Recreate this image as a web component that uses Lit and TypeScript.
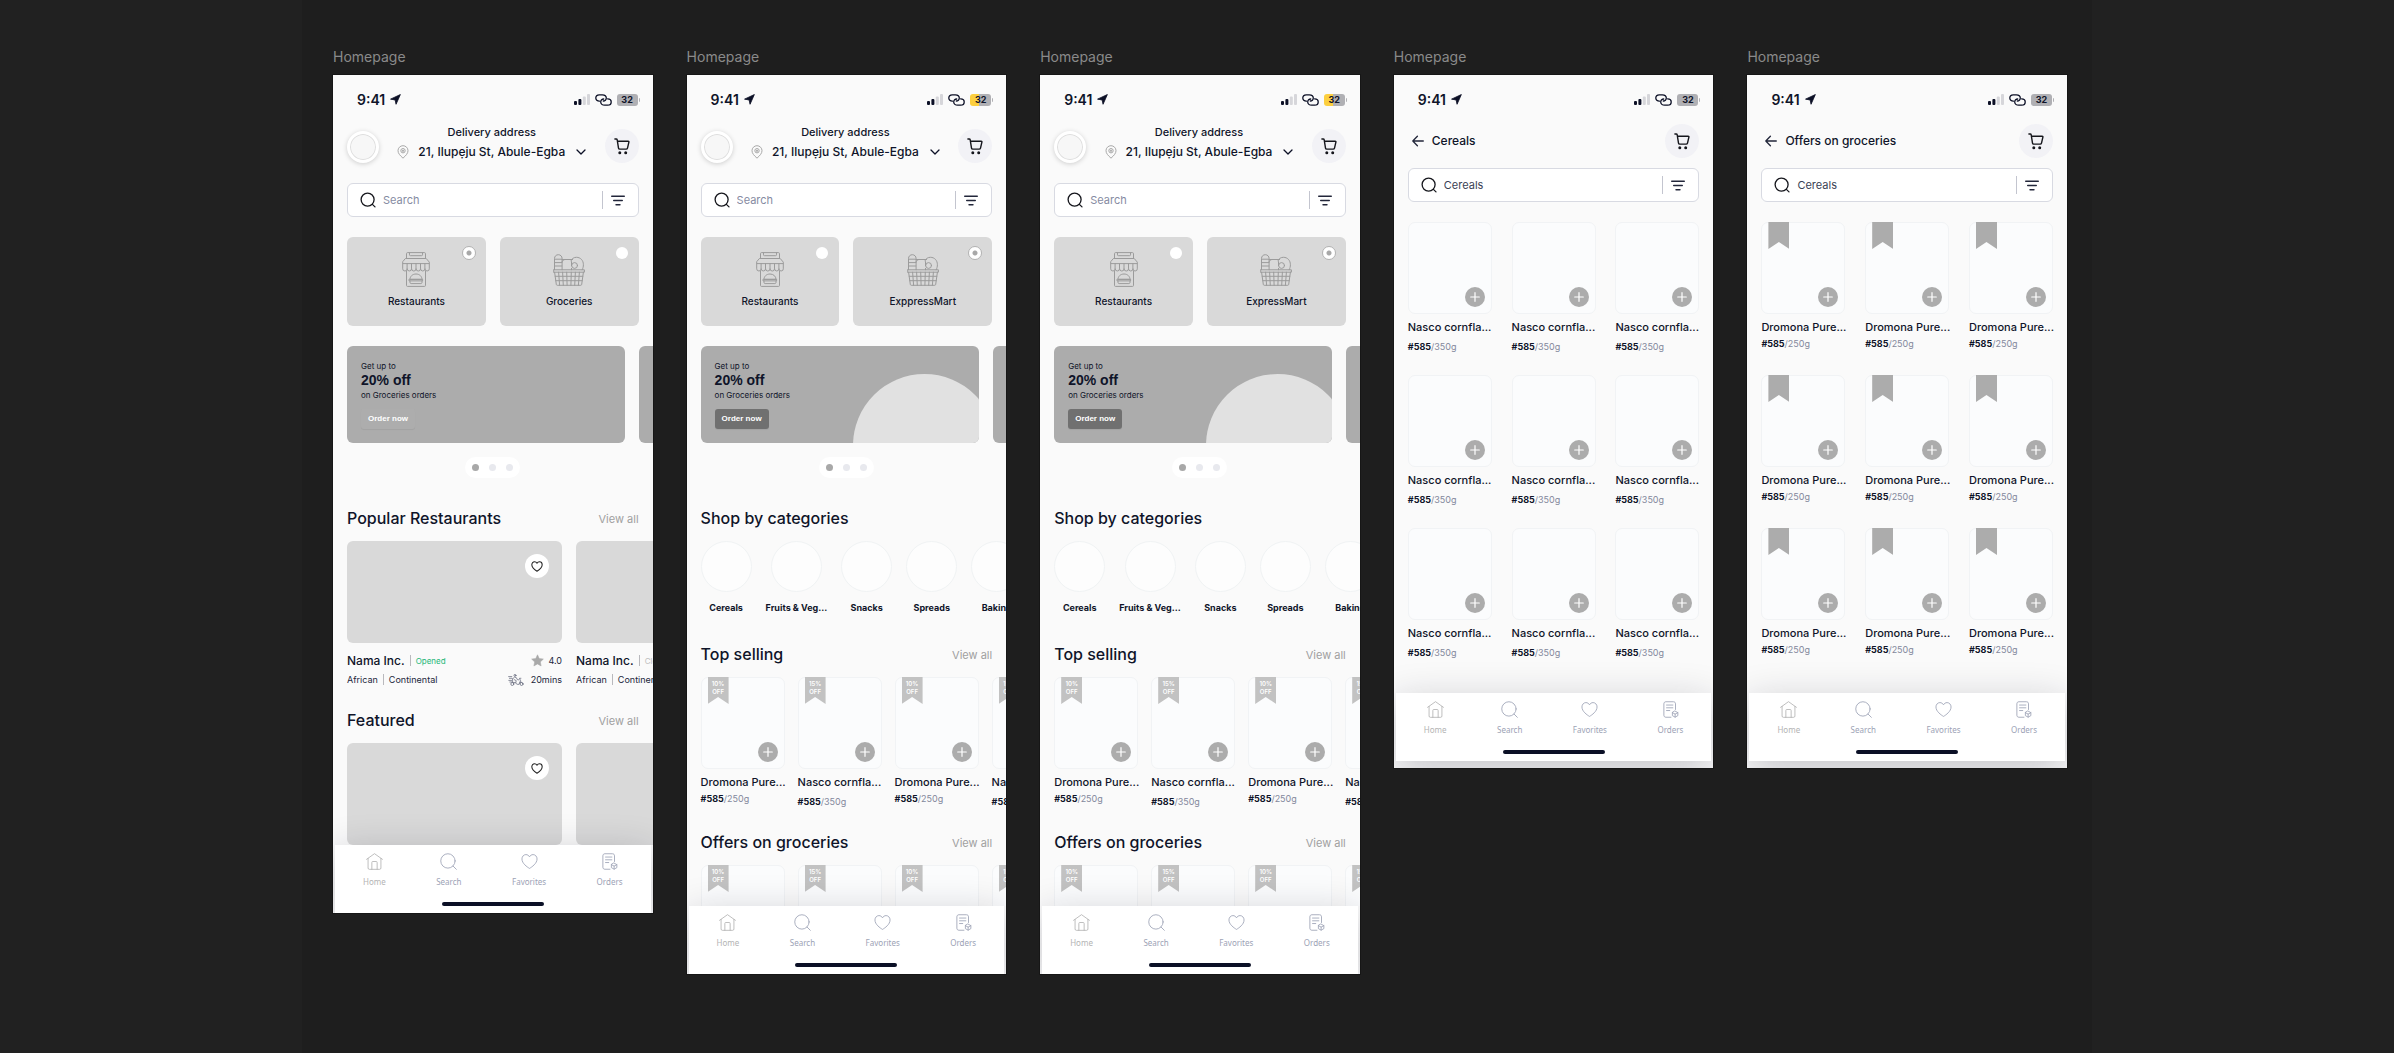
import { LitElement, html, css, svg, nothing } from "lit";
import { customElement, property } from "lit/decorators.js";
import { classMap } from "lit/directives/class-map.js";

type Screen = {
  kind: "restaurants" | "mart" | "list";
  title?: string;
  mart?: string;
  charging?: boolean;
  item?: Product;
};

type Product = { name: string; price: string; unit: string; tag?: string; ribbon?: boolean; roomy?: boolean };

const DROMONA: Product = { name: "Dromona Pure...", price: "#585", unit: "/250g", ribbon: true, tag: "10%" };
const NASCO: Product = { name: "Nasco cornfla...", price: "#585", unit: "/350g", ribbon: true, tag: "15%", roomy: true };

const SCREENS: Screen[] = [
  { kind: "restaurants", mart: "Groceries" },
  { kind: "mart", mart: "ExppressMart", charging: true },
  { kind: "mart", mart: "ExpressMart", charging: true },
  { kind: "list", title: "Cereals", item: { ...NASCO, ribbon: false, tag: undefined } },
  { kind: "list", title: "Offers on groceries", item: { ...DROMONA, tag: undefined } },
];

const icons = {
  arrow: svg`<svg class="loc" viewBox="0 0 12 12"><path d="M11.3.6 6.6 11.2 5.6 6.5.6 5.6z" fill="#0c1026" stroke="#0c1026" stroke-width=".9" stroke-linejoin="round"/></svg>`,
  signal: svg`<svg class="signal" viewBox="0 0 16 11"><rect x="0" y="7" width="3" height="4" rx="1" fill="#0c1026"/><rect x="4.4" y="5" width="3" height="6" rx="1" fill="#0c1026"/><rect x="8.8" y="2.4" width="3" height="8.6" rx="1" fill="#d6d6da"/><rect x="13" y="0" width="3" height="11" rx="1" fill="#d6d6da"/></svg>`,
  chain: svg`<svg class="chain" viewBox="0 0 17 12" fill="none" stroke="#0c1026" stroke-width="1.3" stroke-linecap="round"><path d="M4.4 7.2C2.200 7.200.8 5.900.8 4.100.8 2.200 2.200.9 4.300.9h3c2.300 0 4 1.400 4 3.200 0 1.700-1.400 2.900-3 2.900"/><path d="M12.600 4.800c2.200 0 3.600 1.300 3.600 3.100 0 1.900-1.400 3.200-3.500 3.200h-3c-2.300 0-4-1.400-4-3.200C5.700 6.200 7.100 5 8.700 5"/></svg>`,
  pin: svg`<svg class="pin" viewBox="0 0 12 14" fill="none" stroke="#a9a9a9" stroke-width="1"><path d="M6 13.200C3.200 10.600 1 8.400 1 5.700a5 5 0 0 1 10 0c0 2.700-2.200 4.900-5 7.500z"/><circle cx="6" cy="5.700" r="2.200"/><circle cx="6" cy="5.700" r=".7" fill="#a9a9a9"/></svg>`,
  chevron: svg`<svg class="chev" viewBox="0 0 10 6" fill="none" stroke="#0c1026" stroke-width="1.300" stroke-linecap="round" stroke-linejoin="round"><path d="m1 1 4 4 4-4"/></svg>`,
  cart: svg`<svg class="cart-icon" viewBox="0 0 16 17" fill="none" stroke="#15161c" stroke-width="1.400" stroke-linecap="round" stroke-linejoin="round"><path d="M.9 1h1.300c.6 0 .9.300 1 .9l1.300 8.200c.1.700.5 1 1.200 1h6.500c.7 0 1.100-.3 1.300-1l1.400-6c.1-.6-.1-.9-.7-.9H3.500"/><circle cx="5.800" cy="14.800" r=".8" fill="#15161c"/><circle cx="11.700" cy="14.800" r=".8" fill="#15161c"/></svg>`,
  search: svg`<svg class="search-icon" viewBox="0 0 16 16" fill="none" stroke="#15161c" stroke-width="1.300" stroke-linecap="round"><circle cx="7.600" cy="7.600" r="6.500"/><path d="m12.400 12.400 2.600 2.500"/></svg>`,
  filter: svg`<svg class="filter-icon" viewBox="0 0 14 11" fill="none" stroke="#22263a" stroke-width="1.400" stroke-linecap="round"><path d="M.7 1.200h12.600M2.700 5.500h8.600M5 9.800h4"/></svg>`,
  back: svg`<svg class="back-icon" viewBox="0 0 12 12" fill="none" stroke="#22263a" stroke-width="1.300" stroke-linecap="round" stroke-linejoin="round"><path d="M11.300 6H.8M5.400 1.200.8 6l4.600 4.800"/></svg>`,
  heart: svg`<svg class="heart" viewBox="0 0 18 17" fill="none" stroke="currentColor" stroke-linejoin="round"><path d="M9 15.800C6.500 14.300 1 10.600 1 5.800 1 3.200 2.900 1.200 5.200 1.200c1.600 0 3 .9 3.800 2.300.8-1.400 2.200-2.300 3.800-2.300C15.100 1.200 17 3.200 17 5.800c0 4.800-5.500 8.500-8 10z"/></svg>`,
  star: svg`<svg class="star" viewBox="0 0 24 24"><path fill="#a9a9a9" stroke="#a9a9a9" stroke-linejoin="round" d="m12 1.500 3.200 7 7.600.9-5.600 5.200 1.500 7.500L12 18.300l-6.700 3.800 1.500-7.500L1.200 9.400l7.600-.9z"/></svg>`,
  rider: svg`<svg class="rider" viewBox="0 0 16 12" fill="none" stroke="#5a5f73" stroke-width=".7" stroke-linecap="round" stroke-linejoin="round"><circle cx="7" cy="1.400" r="1"/><path d="M.6 2.600h3.200M1.400 4.300h2.300M.8 6.400h2.800M1.800 8h2M5 4.500l1.600-1.400 1.800.6.900 1.900 1.600.300M6.300 5.700l1.900.9-.4 2.200M4.600 4.600v4h2.600l1.900 1.700h2l1.500-3.600-1.200-2.400h1.500M11.800 8.300h1.700l1.100 1"/><circle cx="4.300" cy="10" r="1.500"/><circle cx="13.600" cy="10" r="1.500"/></svg>`,
  plus: svg`<svg class="plus" viewBox="0 0 10 10" stroke="#fff" stroke-width="1.200" stroke-linecap="round"><path d="M5 .7v8.600M.7 5h8.600"/></svg>`,
  store: svg`<svg class="store" viewBox="0 0 28 35" fill="none" stroke="#9b9b9b" stroke-width="1" stroke-linejoin="round" stroke-linecap="round"><path d="M4.500 6.500V1.600c0-.6.400-1 1-1h17c.6 0 1 .4 1 1v4.900M7.500.8v2c0 .6.300.9.900.9h11.200c.6 0 .9-.3.900-.9v-2"/><path d="M3.800 6.500h20.400l3.100 3.600v1.500H.7v-1.500zM.7 11.600v5.200a2.200 2.200 0 0 0 4.400 0v-5.200M5.100 16.800a2.200 2.200 0 0 0 4.400 0v-5.200M9.500 16.800a2.200 2.200 0 0 0 4.500 0v-5.200M14 16.800a2.200 2.200 0 0 0 4.500 0v-5.200M18.500 16.800a2.200 2.200 0 0 0 4.400 0v-5.200M22.900 16.800a2.200 2.200 0 0 0 4.400 0v-5.200"/><path d="M4.500 19v14.400c0 .6.300 1 .9 1h17.200c.6 0 .9-.4.900-1V19"/><path d="M8 27.200c0-3 2.600-5.200 6-5.200s6 2.200 6 5.200zM7.400 27.200h13.200v1.700H7.400zM8 28.900v1.600c0 .6.500 1.100 1.100 1.100h9.800c.6 0 1.100-.5 1.100-1.100v-1.600"/></svg>`,
  basket: svg`<svg class="basket" viewBox="0 0 32 32" fill="none" stroke="#9b9b9b" stroke-width="1" stroke-linejoin="round" stroke-linecap="round"><path d="M1.500 15.800V4.500C1.500 2.300 3.200.7 5.300.7s3.800 1.600 3.800 3.800v11.300M1.800 5.200h7M1.800 8.600h7M1.800 12h7"/><path d="M9.100 5.500h10.500M12 5.500c-1.500 0-2.900 1-2.900 2.500M18 6.800c1-2.300 3-3.500 5.400-3.500 4.200 0 7 3.200 7 7.400 0 1.800-.4 3.400-1.200 5.100M18.500 7.600v4.200M18.500 14.400v1.400"/><circle cx="21.600" cy="11.500" r="2.900"/><path d="M.6 15.800h30.800v2.400H.6zM1.600 18.200l1.700 12.200c.1.600.4.900 1 .9h23.400c.6 0 .9-.3 1-.9l1.700-12.200M2.200 22.300h27.600M2.800 26.700h26.400M5.600 18.200l1 13.100M9.600 18.200l.7 13.100M13.700 18.200l.4 13.100M18.300 18.200l-.4 13.100M22.400 18.200l-.7 13.100M26.400 18.200l-1 13.100"/></svg>`,
  navHome: svg`<svg class="nav-icon" viewBox="0 0 18 18" fill="none" stroke="currentColor" stroke-width=".9" stroke-linejoin="round" stroke-linecap="round"><path d="M.6 6.700 9 .7l8.400 6M2.200 5.700v10.200c0 .9.500 1.400 1.400 1.400h10.800c.9 0 1.400-.5 1.400-1.400V5.700M6.200 17.300V10c0-.7.300-1 1-1h3.600c.7 0 1 .3 1 1v7.300"/></svg>`,
  navSearch: svg`<svg class="nav-icon" viewBox="0 0 18 18" fill="none" stroke="currentColor" stroke-width=".9" stroke-linecap="round"><circle cx="8.400" cy="8.400" r="7.600"/><path d="m13.900 13.900 3.400 3.400"/></svg>`,
  navOrders: svg`<svg class="nav-icon" viewBox="0 0 18 18" fill="none" stroke="currentColor" stroke-width=".9" stroke-linejoin="round" stroke-linecap="round"><path d="M14.300 9V3c0-1.400-.8-2.200-2.200-2.200H4.200C2.800.8 2 1.600 2 3v12c0 1.400.8 2.200 2.200 2.200h5.300M4.800 4.300h6.700M4.800 7.200h6.700M4.800 10.100h3.400"/><path d="m13.900 10.700 2.900 1.600v3.200l-2.900 1.600-2.900-1.600v-3.200zM11 12.300l2.900 1.600 2.900-1.600M13.900 13.900v3.200"/></svg>`,
};

@customElement("product-tile")
class ProductTile extends LitElement {
  @property({ attribute: false }) product!: Product;

  static styles = css`
    :host { display: block; width: 84px; min-height: 132px; }
    .photo {
      position: relative; box-sizing: border-box; height: 92px; border-radius: 7px;
      border: 1px solid #f1f3f5; background: rgba(251, 253, 254, 0.8);
    }
    .ribbon {
      position: absolute; left: 6px; top: -1px; width: 21px; height: 27px; box-sizing: border-box;
      padding-top: 3px; background: #acacac; color: #fff; text-align: center;
      clip-path: polygon(0 0, 100% 0, 100% 100%, 50% 74%, 0 100%);
      font-size: 6px; line-height: 8px; font-weight: 600;
    }
    .tagged { background: #c2c2c2; }
    .ribbon span { display: block; }
    .add {
      position: absolute; right: 6px; bottom: 6px; width: 20px; height: 20px; padding: 0;
      display: grid; place-items: center; border: 0; border-radius: 50%; background: #acacac;
    }
    .plus { width: 10px; height: 10px; }
    .name { margin: 5px 0 0; font-size: 11px; line-height: 16px; font-weight: 500; white-space: nowrap; color: #0f1429; }
    .price { margin: 2px 0 0; font-size: 9px; line-height: 14px; color: #83889c; white-space: nowrap; }
    .price b { font-weight: 700; color: #0f1429; }
    .roomy { margin-top: 5px; }
  `;

  render() {
    const p = this.product;
    return html`
      <div class="photo">
        ${p.ribbon
          ? html`<div class=${classMap({ ribbon: true, tagged: !!p.tag })}>
              ${p.tag ? html`<span>${p.tag}</span><span>OFF</span>` : nothing}
            </div>`
          : nothing}
        <button class="add" aria-label="Add to cart">${icons.plus}</button>
      </div>
      <p class="name">${p.name}</p>
      <p class=${classMap({ price: true, roomy: !!p.roomy })}><b>${p.price}</b>${p.unit}</p>
    `;
  }
}

@customElement("phone-screen")
class PhoneScreen extends LitElement {
  @property({ attribute: false }) screen!: Screen;

  static styles = css`
    :host { display: block; min-width: 0; font-family: Inter, "Liberation Sans", sans-serif; color: #0f1429; }
    h2, p, ul { margin: 0; padding: 0; }
    button { font: inherit; color: inherit; border: 0; padding: 0; background: none; }
    svg { display: block; flex: none; }
    .phone { background: #fafafa; overflow: hidden; box-shadow: 0 0 0 1px #161616; }
    .body { padding: 16px 14px 0; overflow: hidden; }

    .status { display: flex; align-items: center; height: 17px; padding: 0 0 0 10px; gap: 5px; }
    .time { font-size: 14px; font-weight: 600; line-height: 17px; }
    .loc { width: 11px; height: 11px; margin-right: auto; }
    .signal { width: 16px; height: 11px; }
    .chain { width: 17px; height: 12px; }
    .battery {
      position: relative; width: 21px; height: 12px; margin-right: 1px; border-radius: 3px;
      background: #b0b0b4; font-size: 9px; font-weight: 700; line-height: 12px; text-align: center;
    }
    .battery::after {
      content: ""; position: absolute; left: 22px; top: 4px; width: 1px; height: 4px;
      border-radius: 0 2px 2px 0; background: #b0b0b4;
    }
    .charging { background: linear-gradient(90deg, #fccf3f 42%, #b0b0b4 42%); }

    .home-head { display: flex; align-items: flex-end; justify-content: space-between; height: 40px; margin-top: 15px; }
    .avatar {
      box-sizing: border-box; width: 32px; height: 32px; border-radius: 50%; border: 3px solid #fff;
      background: #f7f7f7; box-shadow: 0 1px 5px rgba(0, 0, 0, 0.18), inset 0 0 0 1px #dedede;
    }
    .where { align-self: flex-start; display: flex; flex-direction: column; align-items: center; font-weight: 500; }
    .where-label { font-size: 11px; line-height: 19px; }
    .where-pick { display: flex; align-items: center; font-size: 12px; line-height: 19px; white-space: nowrap; }
    .pin { width: 12px; height: 14px; margin-right: 9px; }
    .chev { width: 10px; height: 6px; margin-left: 11px; }
    .cart { display: grid; place-items: center; width: 34px; height: 34px; border-radius: 50%; background: #f2f2f6; }
    .cart-icon { width: 16px; height: 17px; }

    .list-head { display: flex; align-items: center; height: 34px; margin-top: 16px; }
    .list-head .cart { margin-left: auto; }
    .back { padding: 4px; }
    .back-icon { width: 12px; height: 12px; }
    .list-title { margin-left: 4px; font-size: 12px; line-height: 18px; font-weight: 500; }

    .search {
      display: flex; align-items: center; box-sizing: border-box; height: 34px; margin-top: 20px;
      padding: 0 13px 0 12px; border: 1px solid #d8dae2; border-radius: 6px; background: #fff;
    }
    .list-search { margin-top: 10px; }
    .search-icon { width: 16px; height: 16px; }
    .query {
      flex: 1; min-width: 0; border: 0; outline: 0; padding: 0 0 0 7px; background: none;
      font: inherit; font-size: 11px; line-height: 16px; color: #3a3f55;
    }
    .query::placeholder { color: #868ba2; opacity: 1; }
    .filter { display: flex; align-items: center; height: 18px; padding-left: 8px; border-left: 1px solid #c3c5cf; }
    .filter-icon { width: 14px; height: 11px; }

    .kinds { display: grid; grid-template-columns: 1fr 1fr; gap: 14px; margin-top: 20px; }
    .kind {
      position: relative; display: flex; flex-direction: column; align-items: center; justify-content: flex-end;
      box-sizing: border-box; height: 89px; padding-bottom: 18px; border-radius: 6px; background: #d9d9d9;
      font-size: 10px; line-height: 14px; font-weight: 500; gap: 7px;
    }
    .store { width: 28px; height: 35px; }
    .basket { width: 32px; height: 32px; margin-bottom: 1px; }
    .radio {
      appearance: none; position: absolute; right: 11px; top: 10px; box-sizing: border-box; width: 12px; height: 12px;
      margin: 0; border-radius: 50%; background: #fff;
    }
    .radio:checked {
      right: 10px; top: 9px; width: 14px; height: 14px; border: 1px solid #b3b3b3;
      background: radial-gradient(circle, #a8a8a8 2px, #fff 3px);
    }

    .row { display: flex; gap: 14px; }
    .banners { margin-top: 20px; }
    .banner {
      flex: none; position: relative; overflow: hidden; box-sizing: border-box; width: 278px; height: 97px;
      padding: 14px 14px 0; border-radius: 6px; background: #acacac; font-size: 8px; line-height: 12px;
    }
    .disc::before {
      content: ""; position: absolute; left: 152px; top: 28px; width: 143px; height: 143px;
      border-radius: 50%; background: #e1e1e1;
    }
    .deal { font-family: "Liberation Sans", Arial, sans-serif; font-size: 14px; line-height: 17px; font-weight: 700; }
    .order {
      display: block; height: 20px; margin-top: 8px; padding: 0 7px; border-radius: 3px; background: #adadad;
      box-shadow: 0 1px 1px rgba(0, 0, 0, 0.06); color: #fff;
      font-family: "Liberation Sans", Arial, sans-serif; font-size: 8px; line-height: 20px; font-weight: 700;
    }
    .disc .order { background: #707070; }
    .dots {
      display: flex; align-items: center; gap: 10px; box-sizing: border-box; width: max-content; height: 21px;
      margin: 14px auto 0; padding: 0 7px; border-radius: 11px; background: #fff;
    }
    .dot { width: 7px; height: 7px; border-radius: 50%; background: #e8e9ee; }
    .current { background: #a8a8a8; }

    .section { display: flex; align-items: center; justify-content: space-between; margin: 28px 0 10px; }
    .section h2 { font-size: 16px; line-height: 25px; font-weight: 500; }
    .section a { font-size: 11px; line-height: 16px; color: #a0a0a0; text-decoration: none; }
    .after-places { margin-top: 19px; }
    .after-cats { margin-top: 27px; }
    .after-products { margin-top: 21px; }

    .place { flex: none; width: 215px; }
    .cover { position: relative; height: 102px; border-radius: 6px; background: #d9d9d9; }
    .like {
      position: absolute; right: 13px; top: 13px; display: grid; place-items: center; width: 24px; height: 24px;
      border-radius: 50%; background: #fff; color: #222;
    }
    .like .heart { width: 12px; height: 11px; stroke-width: 1.6; }
    .line { display: flex; align-items: center; height: 19px; font-size: 9px; color: #22263a; white-space: nowrap; }
    .cover + .line { margin-top: 8px; }
    .place-name { font-size: 12px; font-weight: 500; color: #0f1429; }
    .bar { width: 1px; height: 11px; margin: 0 5px; background: #b9b9bd; }
    .open { font-size: 8px; color: #23b778; }
    .closed { font-size: 8px; color: #bdbdbd; }
    .side { display: flex; align-items: center; gap: 4px; margin-left: auto; }
    .trip { gap: 7px; }
    .star { width: 13px; height: 13px; }
    .rider { width: 16px; height: 12px; }

    .cat {
      flex: none; min-width: 51px; display: flex; flex-direction: column; align-items: center; gap: 9px;
      font-size: 9px; line-height: 14px; font-weight: 700; white-space: nowrap;
    }
    .cat i { box-sizing: border-box; width: 51px; height: 51px; border-radius: 50%; border: 1px solid #f0f3f4; background: #fdfdfd; }

    .products { display: flex; gap: 13px; }
    .products product-tile { flex: none; }
    .peek { height: 41px; }
    .grid { display: grid; grid-template-columns: repeat(3, max-content); justify-content: space-between; row-gap: 21px; margin: 20px 0 33px; }

    .tabbar {
      position: relative; margin: 0 2px; padding: 8px 0 7px; background: #fff;
      box-shadow: 0 10px 40px rgba(20, 20, 40, 0.24);
    }
    .tabs { display: flex; justify-content: space-between; padding: 0 28px; list-style: none; }
    .tab {
      display: flex; flex-direction: column; align-items: center; gap: 6px; text-decoration: none;
      font-family: "Noto Sans", "Open Sans", sans-serif; font-size: 8px; line-height: 12px; color: #9ca2b5;
    }
    .here { color: #b3b3b3; }
    .nav-icon { width: 17px; height: 17px; }
    .tab .heart { width: 17px; height: 17px; stroke-width: 0.9; }
    .grip { width: 102px; height: 4px; margin: 14px auto 0; border-radius: 2px; background: #0b1026; }
    .raised { padding-bottom: 7px; }
  `;

  private section(title: string, link: boolean, cls = "") {
    return html`<div class="section ${cls}">
      <h2>${title}</h2>
      ${link ? html`<a href="#all">View all</a>` : nothing}
    </div>`;
  }

  private place(open: boolean) {
    return html`<article class="place">
      <div class="cover"><button class="like" aria-label="Favorite">${icons.heart}</button></div>
      <div class="line">
        <span class="place-name">Nama Inc.</span><span class="bar"></span>
        <span class=${open ? "open" : "closed"}>${open ? "Opened" : "Closed"}</span>
        <span class="side">${icons.star}4.0</span>
      </div>
      <div class="line">
        African<span class="bar"></span>Continental
        <span class="side trip">${icons.rider}20mins</span>
      </div>
    </article>`;
  }

  private covers() {
    return html`<div class="row">
      ${[0, 1].map(
        () => html`<article class="place">
          <div class="cover"><button class="like" aria-label="Favorite">${icons.heart}</button></div>
        </article>`
      )}
    </div>`;
  }

  private products(cls = "") {
    return html`<div class="products ${cls}">
      ${[DROMONA, NASCO, DROMONA, NASCO].map((p) => html`<product-tile .product=${p}></product-tile>`)}
    </div>`;
  }

  private cart() {
    return html`<button class="cart" aria-label="Cart">${icons.cart}</button>`;
  }

  private searchBox(value: string) {
    return html`<div class=${classMap({ search: true, "list-search": !!value })}>
      ${icons.search}
      <input class="query" type="text" aria-label="Search" placeholder="Search" .value=${value} />
      <button class="filter" aria-label="Filter">${icons.filter}</button>
    </div>`;
  }

  private home(s: Screen) {
    const food = s.kind === "restaurants";
    const disc = !food;
    return html`
      <header class="home-head">
        <div class="avatar"></div>
        <div class="where">
          <span class="where-label">Delivery address</span>
          <button class="where-pick">${icons.pin}21, Ilupẹju St, Abule-Egba${icons.chevron}</button>
        </div>
        ${this.cart()}
      </header>
      ${this.searchBox("")}
      <div class="kinds">
        <label class="kind">${icons.store}Restaurants<input class="radio" type="radio" name="kind" ?checked=${food} /></label>
        <label class="kind">${icons.basket}${s.mart}<input class="radio" type="radio" name="kind" ?checked=${!food} /></label>
      </div>
      <div class="row banners">
        <section class=${classMap({ banner: true, disc })}>
          <p>Get up to</p>
          <p class="deal">20% off</p>
          <p>on Groceries orders</p>
          <button class="order">Order now</button>
        </section>
        <section class="banner"></section>
      </div>
      <div class="dots">
        <button class="dot current" aria-label="Slide 1"></button>
        <button class="dot" aria-label="Slide 2"></button>
        <button class="dot" aria-label="Slide 3"></button>
      </div>
      ${food
        ? html`
            ${this.section("Popular Restaurants", true)}
            <div class="row">${this.place(true)}${this.place(false)}</div>
            ${this.section("Featured", true, "after-places")} ${this.covers()}
          `
        : html`
            ${this.section("Shop by categories", false)}
            <div class="row">
              ${["Cereals", "Fruits & Veg...", "Snacks", "Spreads", "Baking"].map(
                (c) => html`<div class="cat"><i></i>${c}</div>`
              )}
            </div>
            ${this.section("Top selling", true, "after-cats")} ${this.products()}
            ${this.section("Offers on groceries", true, "after-products")} ${this.products("peek")}
          `}
    `;
  }

  private list(s: Screen) {
    return html`
      <header class="list-head">
        <button class="back" aria-label="Back">${icons.back}</button>
        <h2 class="list-title">${s.title}</h2>
        ${this.cart()}
      </header>
      ${this.searchBox("Cereals")}
      <div class="grid">
        ${Array.from({ length: 9 }, () => html`<product-tile .product=${s.item!}></product-tile>`)}
      </div>
    `;
  }

  render() {
    const s = this.screen;
    const isList = s.kind === "list";
    return html`
      <div class=${classMap({ phone: true, raised: isList })}>
        <div class="body">
          <div class="status">
            <span class="time">9:41</span>${icons.arrow} ${icons.signal} ${icons.chain}
            <span class=${classMap({ battery: true, charging: !!s.charging })}>32</span>
          </div>
          ${isList ? this.list(s) : this.home(s)}
        </div>
        <nav class="tabbar">
          <ul class="tabs">
            <li><a class="tab here" href="#home">${icons.navHome}Home</a></li>
            <li><a class="tab" href="#search">${icons.navSearch}Search</a></li>
            <li><a class="tab" href="#favorites">${icons.heart}Favorites</a></li>
            <li><a class="tab" href="#orders">${icons.navOrders}Orders</a></li>
          </ul>
          <div class="grip"></div>
        </nav>
      </div>
    `;
  }
}

@customElement("app-root")
class AppRoot extends LitElement {
  static styles = css`
    :host { display: block; min-height: 100vh; background: #212121; font-family: Inter, "Liberation Sans", sans-serif; }
    .canvas {
      display: grid; grid-template-columns: repeat(5, minmax(0, 1fr)); column-gap: 34px; align-items: start;
      box-sizing: border-box; max-width: 1790px; min-height: 100vh; margin: 0 auto;
      padding: 45px 25px 40px 31px; background: #1e1e1e;
    }
    .label { margin: 0 0 7px; font-size: 14px; line-height: 23px; font-weight: 400; color: #8a8a8a; }
  `;

  render() {
    return html`<main class="canvas">
      ${SCREENS.map(
        (s) => html`<section>
          <p class="label">Homepage</p>
          <phone-screen .screen=${s}></phone-screen>
        </section>`
      )}
    </main>`;
  }
}
